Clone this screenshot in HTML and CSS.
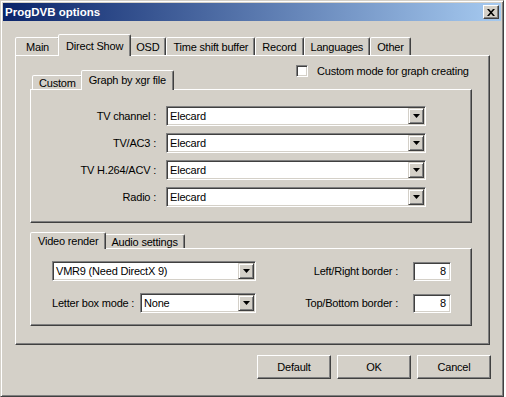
FILE: index.html
```html
<!DOCTYPE html>
<html lang="en">
<head>
    <meta charset="UTF-8">
    <title>ProgDVB options</title>
    <link rel="stylesheet" href="styles.css">
</head>
<body>
    <div class="window">
        <div class="titlebar">
            <span class="title">ProgDVB options</span>
            <span class="close">
                <svg width="8" height="7" viewBox="0 0 8 7"><path d="M0 0h2l2 2.2L6 0h2L5 3.5 8 7H6L4 4.8 2 7H0l3-3.5z" fill="#000"/></svg>
            </span>
        </div>

        <div class="dialog-body">
            <div class="tabs main-tabs">
                <div class="tab tab-first">Main</div>
                <div class="tab active">Direct Show</div>
                <div class="tab">OSD</div>
                <div class="tab">Time shift buffer</div>
                <div class="tab">Record</div>
                <div class="tab">Languages</div>
                <div class="tab">Other</div>
            </div>

            <div class="panel outer">
                <div class="top-row">
                    <div class="tabs sub-tabs graph-tabs">
                        <div class="tab">Custom</div>
                        <div class="tab active">Graph by xgr file</div>
                    </div>
                    <div class="check">
                        <span class="check-box"></span>
                        <span>Custom mode for graph creating</span>
                    </div>
                </div>

                <div class="panel graph">
                    <span class="lbl">TV channel :</span>
                    <div class="combo"><span class="combo-text">Elecard</span><span class="drop"><svg width="7" height="4" viewBox="0 0 7 4"><path d="M0 0h7L3.5 4z" fill="#000"/></svg></span></div>
                    <span class="lbl">TV/AC3 :</span>
                    <div class="combo"><span class="combo-text">Elecard</span><span class="drop"><svg width="7" height="4" viewBox="0 0 7 4"><path d="M0 0h7L3.5 4z" fill="#000"/></svg></span></div>
                    <span class="lbl">TV H.264/ACV :</span>
                    <div class="combo"><span class="combo-text">Elecard</span><span class="drop"><svg width="7" height="4" viewBox="0 0 7 4"><path d="M0 0h7L3.5 4z" fill="#000"/></svg></span></div>
                    <span class="lbl">Radio :</span>
                    <div class="combo"><span class="combo-text">Elecard</span><span class="drop"><svg width="7" height="4" viewBox="0 0 7 4"><path d="M0 0h7L3.5 4z" fill="#000"/></svg></span></div>
                </div>

                <div class="tabs sub-tabs render-tabs">
                    <div class="tab active">Video render</div>
                    <div class="tab">Audio settings</div>
                </div>

                <div class="panel render">
                    <div class="render-row">
                        <div class="render-left">
                            <div class="combo combo-wide"><span class="combo-text">VMR9 (Need DirectX 9)</span><span class="drop"><svg width="7" height="4" viewBox="0 0 7 4"><path d="M0 0h7L3.5 4z" fill="#000"/></svg></span></div>
                        </div>
                        <div class="render-right">
                            <span>Left/Right border :</span>
                            <span class="num">8</span>
                        </div>
                    </div>
                    <div class="render-row">
                        <div class="render-left">
                            <span>Letter box mode :</span>
                            <div class="combo combo-small"><span class="combo-text">None</span><span class="drop"><svg width="7" height="4" viewBox="0 0 7 4"><path d="M0 0h7L3.5 4z" fill="#000"/></svg></span></div>
                        </div>
                        <div class="render-right">
                            <span>Top/Bottom border :</span>
                            <span class="num">8</span>
                        </div>
                    </div>
                </div>
            </div>

            <div class="buttons">
                <span class="btn">Default</span>
                <span class="btn">OK</span>
                <span class="btn">Cancel</span>
            </div>
        </div>
    </div>
</body>
</html>
```

FILE: styles.css
```css
body {
    margin: 0;
    background: #fff;
    font-family: "Liberation Sans", Arial, sans-serif;
    font-size: 11px;
    letter-spacing: -0.2px;
    color: #000;
    white-space: nowrap;
}
.window {
    width: 504px;
    height: 397px;
    box-sizing: border-box;
    background: #d4d0c8;
    border: 1px solid;
    border-color: #d4d0c8 #404040 #404040 #d4d0c8;
    box-shadow: inset 1px 1px #fff, inset -1px -1px #808080;
    padding: 2px;
    display: flex;
    flex-direction: column;
}
.titlebar {
    height: 18px;
    display: flex;
    align-items: center;
    justify-content: space-between;
    padding: 0 2px 0 2px;
    background: linear-gradient(to right, #0a246a, #a6caf0);
    color: #fff;
    font-weight: bold;
    font-size: 11.5px;
    letter-spacing: 0;
}
.close {
    width: 16px;
    height: 14px;
    box-sizing: border-box;
    background: #d4d0c8;
    border: 1px solid;
    border-color: #fff #404040 #404040 #fff;
    box-shadow: inset -1px -1px #808080;
    display: flex;
    align-items: center;
    justify-content: center;
}
.dialog-body {
    padding: 13px 11px 0 12px;
    display: flex;
    flex-direction: column;
}

/* tabs */
.tabs {
    display: flex;
    align-items: flex-end;
}
.tab {
    box-sizing: border-box;
    padding: 0 6px;
    border: 1px solid;
    border-bottom: none;
    border-color: #fff #404040 transparent #fff;
    box-shadow: inset -1px 0 #808080;
    border-radius: 2px 2px 0 0;
    background: #d4d0c8;
    display: flex;
    align-items: center;
    justify-content: center;
}
.tab.active {
    position: relative;
    z-index: 1;
    margin: 0 -2px -1px;
    padding: 0 7px;
}
.main-tabs .tab { height: 18px; }
.main-tabs .tab.active { height: 22px; }
.main-tabs .tab-first { padding: 0 10px; }

.sub-tabs { padding-left: 2px; }
.graph-tabs {
    flex: 0 0 266px;
    box-sizing: border-box;
    align-self: flex-end;
}
.graph-tabs .tab { height: 14px; }
.graph-tabs .tab.active { height: 20px; padding-bottom: 2px; }
.render-tabs { margin-top: 9px; }
.render-tabs .tab { height: 14px; }
.render-tabs .tab.active { height: 17px; }

/* panels */
.panel {
    border: 1px solid;
    border-color: #fff #404040 #404040 #fff;
    box-shadow: inset -1px -1px #808080;
}
.outer {
    padding: 8px 17px 18px 14px;
}
.top-row {
    display: flex;
    height: 25px;
}
.check {
    align-self: flex-start;
    margin-top: 1px;
    display: flex;
    align-items: center;
    gap: 9px;
}
.check-box {
    width: 12px;
    height: 12px;
    box-sizing: border-box;
    background: #fff;
    border: 1px solid;
    border-color: #808080 #fff #fff #808080;
    box-shadow: inset 1px 1px #404040, inset -1px -1px #d4d0c8;
}
.graph {
    display: grid;
    grid-template-columns: 116px 260px;
    column-gap: 10px;
    row-gap: 7px;
    align-items: center;
    padding: 16px 0 15px 9px;
}
.lbl { text-align: right; }

/* combo boxes and edits */
.combo {
    height: 20px;
    box-sizing: border-box;
    padding: 1px;
    background: #fff;
    border: 1px solid;
    border-color: #808080 #fff #fff #808080;
    box-shadow: inset 1px 1px #404040, inset -1px -1px #d4d0c8;
    display: flex;
    align-items: center;
}
.combo-text { padding-left: 2px; }
.drop {
    margin-left: auto;
    width: 16px;
    height: 16px;
    box-sizing: border-box;
    background: #d4d0c8;
    border: 1px solid;
    border-color: #d4d0c8 #404040 #404040 #d4d0c8;
    box-shadow: inset 1px 1px #fff, inset -1px -1px #808080;
    display: flex;
    align-items: center;
    justify-content: center;
}
.render {
    padding: 12px 20px 12px 21px;
    display: flex;
    flex-direction: column;
    gap: 12px;
}
.render-row {
    display: flex;
    align-items: center;
    height: 20px;
}
.render-left {
    width: 204px;
    display: flex;
    align-items: center;
    justify-content: space-between;
}
.combo-wide { width: 204px; }
.combo-small { width: 116px; }
.render-right {
    margin-left: auto;
    display: flex;
    align-items: center;
    gap: 15px;
}
.num {
    width: 38px;
    height: 19px;
    box-sizing: border-box;
    padding-right: 4px;
    background: #fff;
    border: 1px solid;
    border-color: #808080 #fff #fff #808080;
    box-shadow: inset 1px 1px #404040, inset -1px -1px #d4d0c8;
    display: flex;
    align-items: center;
    justify-content: flex-end;
}

/* buttons */
.buttons {
    display: flex;
    justify-content: flex-end;
    gap: 6px;
    margin: 10px -1px 0 0;
}
.btn {
    width: 74px;
    height: 24px;
    box-sizing: border-box;
    border: 1px solid;
    border-color: #fff #404040 #404040 #fff;
    box-shadow: inset -1px -1px #808080;
    display: flex;
    align-items: center;
    justify-content: center;
}
```
